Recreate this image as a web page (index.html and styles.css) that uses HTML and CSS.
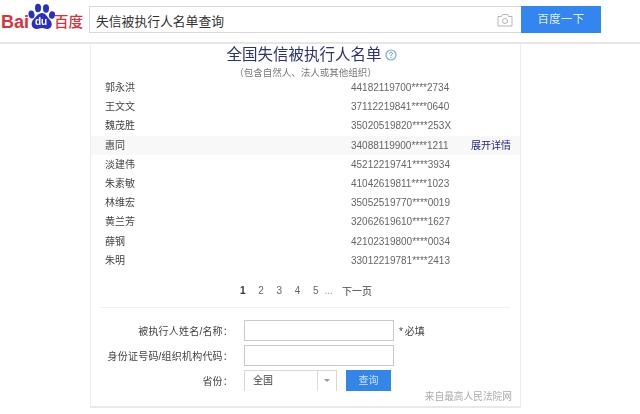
FILE: index.html
```html
<!DOCTYPE html>
<html lang="zh">
<head>
<meta charset="utf-8">
<title>全国失信被执行人名单</title>
<link rel="stylesheet" href="styles.css">
</head>
<body>
<header class="top">
  <div class="logo">
    <span class="logo-bai">Bai</span>
    <span class="paw">
      <svg width="27" height="29" viewBox="0 0 27 29">
        <ellipse cx="3.5" cy="12.5" rx="3" ry="4" fill="#2a2fc4" transform="rotate(-12 3.5 12.5)"/>
        <ellipse cx="10" cy="6" rx="3" ry="4.2" fill="#2a2fc4"/>
        <ellipse cx="18" cy="6.5" rx="3" ry="4.2" fill="#2a2fc4"/>
        <ellipse cx="24" cy="13" rx="3" ry="3.8" fill="#2a2fc4" transform="rotate(12 24 13)"/>
        <path d="M14 11c4 0 5 4 8 7 3 3 2 9-3 9-2 0-3-1-5-1s-3 1-5 1c-5 0-7-5-4-9 3-3 5-7 9-7z" fill="#2a2fc4"/>
      </svg>
      <span class="paw-du">du</span>
    </span>
    <span class="logo-cn">百度</span>
  </div>
  <div class="search">
    <div class="search-box">
      <span class="query">失信被执行人名单查询</span>
      <svg class="camera" width="16" height="14" viewBox="0 0 16 14">
        <path d="M1 3.5h3.5l1-2h5l1 2H15v9.500H1z" fill="none" stroke="#b5b5b5"/>
        <circle cx="8" cy="8" r="2.500" fill="none" stroke="#b5b5b5"/>
      </svg>
    </div>
    <div class="search-btn">百度一下</div>
  </div>
</header>
<main class="card">
  <h1 class="title">全国失信被执行人名单
    <svg class="help" width="12" height="12" viewBox="0 0 12 12">
      <circle cx="6" cy="6" r="5" fill="none" stroke="#6fb0d8" stroke-width="1.200"/>
      <path d="M4.500 4.800c0-2 3-2 3-.2 0 1.200-1.500 1-1.500 2.400M6 8v1" fill="none" stroke="#5a8fc8"/>
    </svg>
  </h1>
  <p class="sub">（包含自然人、法人或其他组织）</p>
  <ul class="list">
    <li class="row"><span class="name">郭永洪</span><span class="id">44182119700****2734</span></li>
    <li class="row"><span class="name">王文文</span><span class="id">37112219841****0640</span></li>
    <li class="row"><span class="name">魏茂胜</span><span class="id">35020519820****253X</span></li>
    <li class="row hot"><span class="name">惠同</span><span class="id">34088119900****1211</span><span class="more">展开详情</span></li>
    <li class="row"><span class="name">淡建伟</span><span class="id">45212219741****3934</span></li>
    <li class="row"><span class="name">朱素敏</span><span class="id">41042619811****1023</span></li>
    <li class="row"><span class="name">林维宏</span><span class="id">35052519770****0019</span></li>
    <li class="row"><span class="name">黄兰芳</span><span class="id">32062619610****1627</span></li>
    <li class="row"><span class="name">薛钢</span><span class="id">42102319800****0034</span></li>
    <li class="row"><span class="name">朱明</span><span class="id">33012219781****2413</span></li>
  </ul>
  <nav class="pager">
    <span class="pages"><b class="cur">1</b><span>2</span><span>3</span><span>4</span><span>5</span></span><span class="dots">...</span><span class="next">下一页</span>
  </nav>
  <form class="form">
    <div class="f-row">
      <label class="f-label">被执行人姓名/名称：</label>
      <div class="input"></div>
      <span class="req">* 必填</span>
    </div>
    <div class="f-row">
      <label class="f-label">身份证号码/组织机构代码：</label>
      <div class="input"></div>
    </div>
    <div class="f-row">
      <label class="f-label">省份：</label>
      <div class="select"><span class="sel-text">全国</span><span class="sel-arrow"><i class="tri"></i></span></div>
      <div class="query-btn">查询</div>
    </div>
    <span class="source">来自最高人民法院网</span>
  </form>
</main>
</body>
</html>
```
FILE: styles.css
```css
* { box-sizing: border-box; }
html, body { margin: 0; padding: 0; }
body {
  width: 640px;
  height: 414px;
  overflow: hidden;
  background: #fff;
  color: #444;
  font-family: "Liberation Sans", "Noto Sans CJK SC", sans-serif;
  font-size: 10px;
  filter: blur(0.35px);
}
.top {
  height: 44px;
  display: flex;
  padding-top: 6px;
  background: #fff;
  border-bottom: 2px solid #e6e6e6;
}
.logo {
  width: 89px;
  height: 27px;
  display: flex;
  align-items: center;
  color: #d8333c;
  font-weight: bold;
}
.logo-bai { font-size: 18px; margin: 5px 0 0 1px; line-height: 20px; }
.paw { position: relative; width: 26px; height: 27px; margin: -8px 0 0 -1px; flex: none; }
.paw svg { display: block; }
.paw-du {
  position: absolute;
  left: 7px;
  top: 14px;
  color: #fff;
  font-size: 10px;
  line-height: 12px;
}
.logo-cn { font-size: 14.5px; margin-top: 5px; line-height: 20px; font-weight: 500; }
.search { display: flex; width: 512px; height: 27px; }
.search-box {
  width: 432px;
  display: flex;
  align-items: center;
  justify-content: space-between;
  padding: 0 7px 0 6px;
  border: 1px solid #d8d8d8;
  border-right: 0;
}
.query { font-size: 12.8px; color: #333; padding-top: 1px; }
.camera { margin-right: 1px; }
.search-btn {
  width: 80px;
  background: #3385f0;
  color: #e4effd;
  font-size: 11.5px;
  text-align: center;
  line-height: 27px;
  letter-spacing: 0.3px;
}
.card {
  width: 431px;
  height: 365px;
  margin-left: 90px;
  margin-top: -1px;
  border-left: 1px solid #ededed;
  border-right: 1px solid #ededed;
  border-bottom: 2px solid #e9e9e9;
  display: flex;
  flex-direction: column;
}
.title {
  margin: 0;
  padding: 1px 0 0 12px;
  height: 22px;
  display: flex;
  align-items: center;
  justify-content: center;
  gap: 3px;
  font-size: 15.5px;
  line-height: 20px;
  font-weight: normal;
  color: #2b3278;
}
.help { flex: none; }
.sub {
  margin: 0;
  height: 13px;
  line-height: 15px;
  text-align: center;
  font-size: 9.5px;
  color: #777;
}
.list { list-style: none; margin: 0; padding: 0; }
.row {
  height: 19.2px;
  display: flex;
  align-items: center;
  padding-left: 14px;
  line-height: 19px;
  color: #555;
}
.row.hot { background: #f8f8f8; }
.name { width: 246px; color: #444; }
.id { width: 120px; color: #666; }
.more { color: #24248c; }
.pager {
  height: 34px;
  margin-top: 3px;
  padding-top: 1px;
  display: flex;
  align-items: center;
  padding-left: 149px;
  color: #666;
}
.pages { display: flex; gap: 12.7px; }
.cur { color: #333; }
.dots { margin-left: 6px; color: #999; }
.next { margin-left: 9px; color: #444; }
.form {
  position: relative;
  margin: 0 10px;
  padding-top: 12px;
  border-top: 1px solid #f0f0f0;
  flex: 1;
  display: flex;
  flex-direction: column;
  gap: 4px;
}
.f-row { display: flex; align-items: center; height: 21px; }
.f-label { width: 132px; text-align: right; color: #444; letter-spacing: 0.2px; }
.input {
  width: 150px;
  height: 21px;
  margin-left: 11px;
  border: 1px solid #c9c9c9;
  background: #fff;
}
.req { margin-left: 5px; color: #444; word-spacing: -1px; }
.select {
  width: 93px;
  height: 21px;
  margin-left: 11px;
  display: flex;
  border: 1px solid #d8d8d8;
  border-bottom: 0;
}
.sel-text { flex: 1; padding-left: 8px; line-height: 20px; color: #444; }
.sel-arrow {
  width: 19px;
  border-left: 1px solid #ddd;
  display: flex;
  align-items: center;
  justify-content: center;
}
.tri {
  width: 0;
  height: 0;
  border-left: 3px solid transparent;
  border-right: 3px solid transparent;
  border-top: 3px solid #999;
}
.query-btn {
  width: 45px;
  height: 21px;
  margin-left: 9px;
  background: #3385e8;
  color: #cfe2fb;
  text-align: center;
  line-height: 21px;
}
.source {
  position: absolute;
  right: -2px;
  bottom: 3px;
  color: #aaa;
  font-size: 9.700px;
}
```
